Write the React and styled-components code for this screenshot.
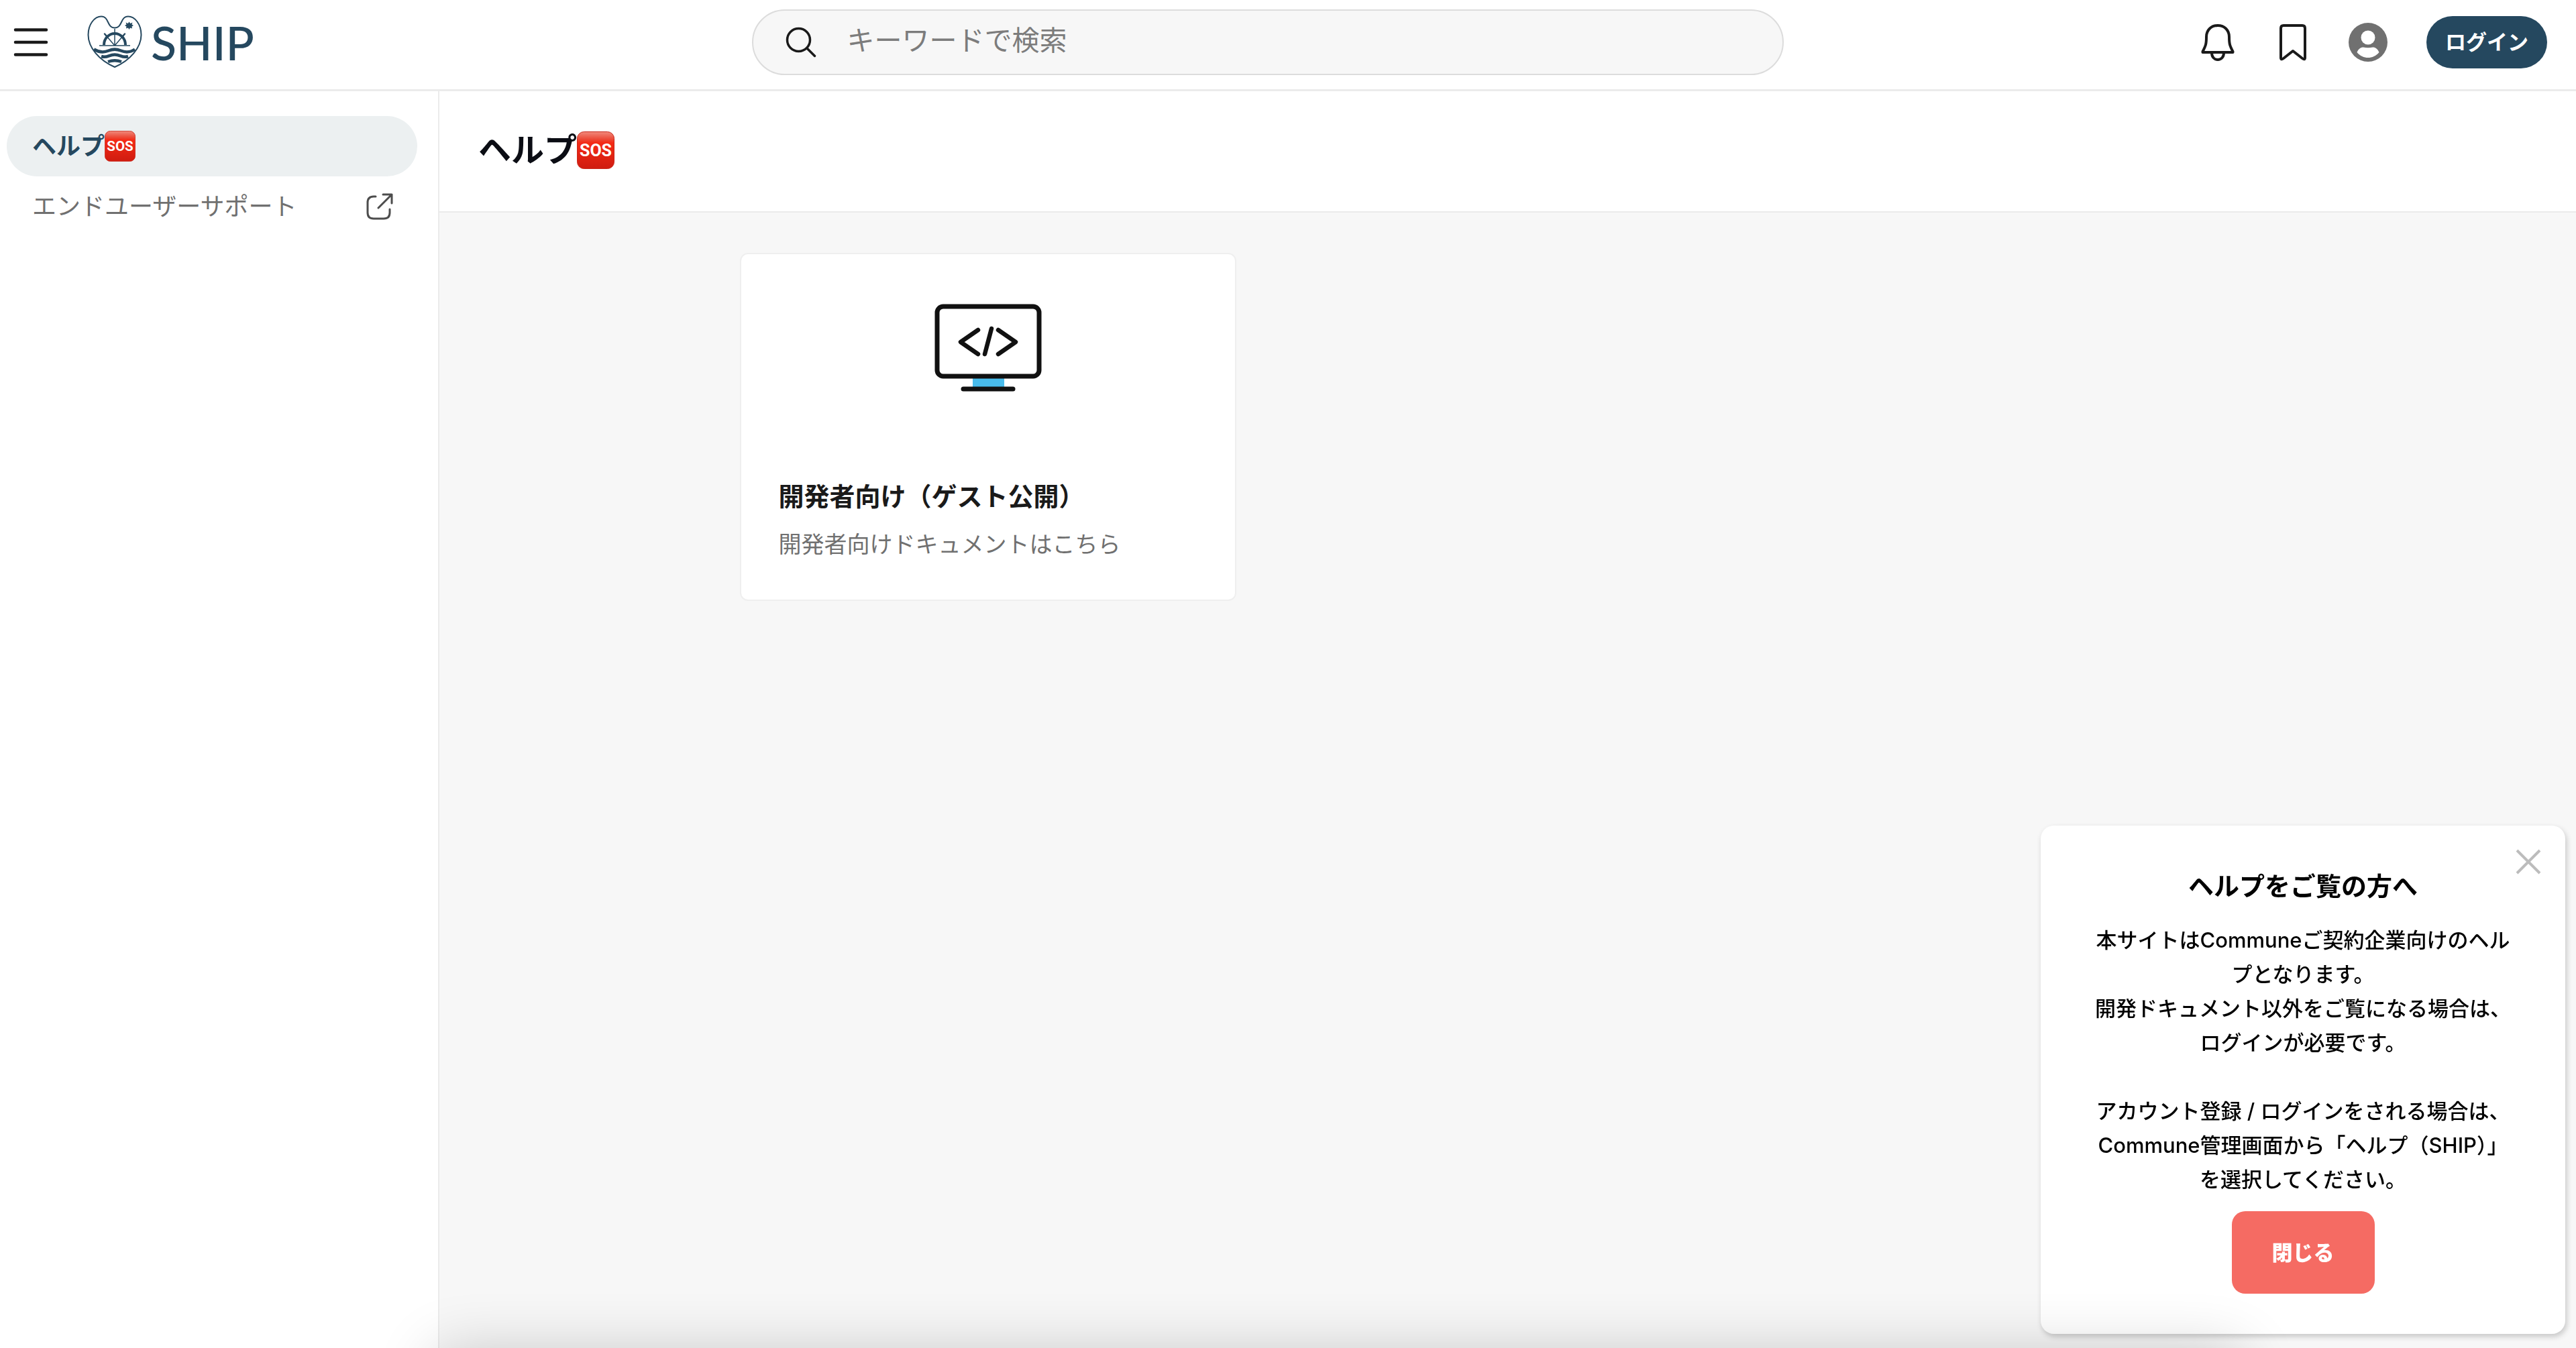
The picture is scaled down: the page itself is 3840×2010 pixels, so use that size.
import React from "react";
import styled, { createGlobalStyle } from "styled-components";

const color = {
  ink: "#1a1a1a",
  navy: "#25485f",
  grey: "#707070",
  line: "#ebebeb",
  canvas: "#f7f7f7",
};

const GlobalStyle = createGlobalStyle`
  *, *::before, *::after { box-sizing: border-box; }
  body {
    margin: 0;
    background: #fff;
    color: ${color.ink};
    font-family: Inter, "Noto Sans CJK JP", sans-serif;
    overflow: hidden;
  }
  button, input { font: inherit; }
  h1, h2, p, ul { margin: 0; padding: 0; }
`;

const Page = styled.div`
  display: flex;
  flex-direction: column;
  min-height: 100vh;
`;

const Header = styled.header`
  display: grid;
  grid-template-columns: 29fr minmax(0, 1538px) 30fr;
  align-items: center;
  height: 136px;
  padding: 0 43px 8px 20px;
  border-bottom: 3px solid ${color.line};
`;

const HeaderStart = styled.div`
  display: flex;
  align-items: center;
  gap: 58px;
`;

const HeaderEnd = styled.nav`
  display: flex;
  justify-content: flex-end;
  align-items: center;
  gap: 58px;
`;

const IconGroup = styled.div`
  display: grid;
  grid-template-columns: repeat(3, 58px);
  align-items: center;
  gap: 54px;
`;

const IconButton = styled.button`
  display: flex;
  justify-content: center;
  padding: 0;
  border: 0;
  background: none;
  color: ${(p) => p.$color || color.ink};
  cursor: pointer;
`;

const Brand = styled.a`
  display: flex;
  align-items: center;
  gap: 13px;
  color: ${color.navy};
  text-decoration: none;
`;

const BrandName = styled.span`
  font-family: Lato, sans-serif;
  font-size: 70px;
  line-height: 80px;
  font-weight: 500;
`;

const Search = styled.label`
  display: flex;
  align-items: center;
  gap: 46px;
  height: 98px;
  padding: 0 48px;
  border: 2px solid #dcdcdc;
  border-radius: 49px;
  background: ${color.canvas};
`;

const SearchInput = styled.input`
  flex: 1;
  min-width: 0;
  padding: 0 0 6px;
  border: 0;
  outline: 0;
  background: none;
  font-size: 41px;
  line-height: 60px;
  color: ${color.ink};
  &::placeholder { color: #7c7c7c; opacity: 1; }
`;

const LoginButton = styled.button`
  height: 78px;
  padding: 0 28px;
  border: 0;
  border-radius: 39px;
  background: ${color.navy};
  color: #fff;
  font-size: 31px;
  font-weight: 700;
  line-height: 46px;
`;

const Body = styled.div`
  display: flex;
  flex: 1;
`;

const Sidebar = styled.aside`
  flex: none;
  width: 655px;
  padding: 37px 31px 0 10px;
  border-right: 2px solid ${color.line};
`;

const NavList = styled.ul`
  list-style: none;
`;

const NavLink = styled.a`
  display: flex;
  align-items: center;
  justify-content: ${(p) => (p.$active ? "flex-start" : "space-between")};
  height: 90px;
  padding: 0 36px 0 38px;
  border-radius: 45px;
  background: ${(p) => (p.$active ? "#ecf0f1" : "transparent")};
  color: ${(p) => (p.$active ? color.navy : color.grey)};
  font-size: 36px;
  font-weight: ${(p) => (p.$active ? 700 : 400)};
  line-height: 52px;
  text-decoration: none;
`;

const Main = styled.main`
  flex: 1;
  display: flex;
  flex-direction: column;
  background: ${color.canvas};
`;

const TitleBar = styled.div`
  display: flex;
  align-items: center;
  height: 181px;
  padding: 0 58px 4px;
  border-bottom: 2px solid ${color.line};
  background: #fff;
`;

const Title = styled.h1`
  display: flex;
  align-items: center;
  font-size: 49px;
  line-height: 72px;
  font-weight: 700;
  color: #0b0d14;
`;

const CardGrid = styled.section`
  display: grid;
  grid-template-columns: repeat(3, 1fr);
  gap: 35px;
  width: 100%;
  max-width: 2290px;
  margin: 0 auto;
  padding: 60px 0;
`;

const Card = styled.a`
  display: flex;
  flex-direction: column;
  padding: 74px 56px 58px;
  border: 2px solid #efefef;
  border-radius: 12px;
  background: #fff;
  color: ${color.ink};
  text-decoration: none;
`;

const CardArt = styled.div`
  display: flex;
  justify-content: center;
  padding-bottom: 127px;
`;

const CardTitle = styled.h2`
  font-size: 38px;
  line-height: 56px;
  font-weight: 700;
`;

const CardText = styled.p`
  margin-top: 20px;
  font-size: 34px;
  line-height: 48px;
  color: ${color.grey};
`;

const Popup = styled.section`
  position: fixed;
  right: 16px;
  bottom: 21px;
  width: 782px;
  padding: 62px 60px 60px;
  border-radius: 20px;
  background: #fff;
  box-shadow: 2px 4px 8px rgba(0, 0, 0, 0.2);
  color: #000;
  text-align: center;
`;

const PopupClose = styled(IconButton)`
  position: absolute;
  top: 35px;
  right: 36px;
`;

const PopupTitle = styled.h2`
  font-size: 38px;
  line-height: 56px;
  font-weight: 700;
`;

const PopupText = styled.p`
  margin: 27px 0 22px;
  font-size: 31px;
  line-height: 51px;
  font-weight: 500;
  white-space: nowrap;
`;

const PopupButton = styled.button`
  height: 123px;
  padding: 0 60px;
  border: 0;
  border-radius: 20px;
  background: #f56b63;
  color: #fff;
  font-size: 31px;
  line-height: 46px;
  font-weight: 900;
`;

const BottomShade = styled.div`
  position: fixed;
  top: 100%;
  left: 650px;
  right: 500px;
  height: 200px;
  box-shadow: 0 6px 90px rgba(0, 0, 0, 0.2);
  pointer-events: none;
`;

function MenuIcon() {
  return (
    <svg width="52" height="44" viewBox="0 0 52 44" stroke="currentColor" strokeWidth="4.5" strokeLinecap="round" aria-hidden="true">
      <path d="M3 3.5H49M3 22H49M3 40.5H49" />
    </svg>
  );
}

function ShipMark() {
  return (
    <svg width="82" height="80" viewBox="0 0 82 80" fill="none" stroke="currentColor" aria-hidden="true">
      <path strokeWidth="2" d="M41 77C18 67 1.500 48 1.500 29C1.500 13 11 1.500 21 1.500C33 1.500 29 18.500 41 18.500C53 18.500 49 1.500 61 1.500C71 1.500 80.500 13 80.500 29C80.500 48 64 67 41 77Z" />
      <path strokeWidth="4" d="M25 44A16 17 0 0 1 57 44" />
      <path strokeWidth="1.500" d="M18 45H64M41 45V20M41 45L29 31M41 45L53 31" />
      <path strokeWidth="2.500" strokeLinecap="round" d="M29 31L26 27.500M53 31L56 27.500" />
      <path strokeWidth="4.500" d="M10 50.500C19 56 26 55 32 52.500C38 50 44 50 50 52.500C56 55 63 56 71 50.500M21 61C30 64 32 58.500 41 58.500C50 58.500 52 64 61 61M31 69C38 66.500 44 66.500 51 69" />
      <path fill="currentColor" stroke="none" d="M62.500 9.500L64.300 12L67.500 10.500L66.500 13.500L69 15L66.500 16.500L67 19.500L64 18.500L62.500 21L61 18.500L58 19.500L58.500 16.500L56 15L58.500 13.500L57.500 10.500L60.700 12Z" />
    </svg>
  );
}

function SearchIcon() {
  return (
    <svg width="46" height="46" viewBox="0 0 46 46" fill="none" stroke={color.ink} strokeWidth="3.5" strokeLinecap="round" aria-hidden="true">
      <circle cx="19.5" cy="19.5" r="17" />
      <path d="M32 32L43.500 43.500" />
    </svg>
  );
}

function BellIcon() {
  return (
    <svg width="50" height="56" viewBox="0 0 50 56" fill="none" stroke="currentColor" strokeWidth="4" strokeLinejoin="round" aria-hidden="true">
      <path d="M25 3C15 3 8 10 8 20C8 31 7 33 2.500 42V43H47.500V42C43 33 42 31 42 20C42 10 35 3 25 3Z" />
      <path d="M16 44C16 50 20 54 25 54C30 54 34 50 34 44" />
    </svg>
  );
}

function BookmarkIcon() {
  return (
    <svg width="40" height="56" viewBox="0 0 40 56" fill="none" stroke="currentColor" strokeWidth="4" strokeLinejoin="round" aria-hidden="true">
      <path d="M2 7Q2 3 6 3H34Q38 3 38 7V51Q38 55 34 52L20 41L6 52Q2 55 2 51Z" />
    </svg>
  );
}

function AvatarIcon() {
  return (
    <svg width="58" height="58" viewBox="0 0 58 58" aria-hidden="true">
      <circle cx="29" cy="29" r="29" fill="currentColor" />
      <circle cx="29" cy="22" r="10.5" fill="#fff" />
      <path fill="#fff" d="M12.500 44C15 38 19 36.500 22 36.500Q29 38 36 36.500C39 36.500 43 38 45.500 44C41 49.500 35 52 29 52C23 52 17 49.500 12.500 44Z" />
    </svg>
  );
}

function ExternalIcon() {
  return (
    <svg width="40" height="40" viewBox="0 0 40 40" fill="none" stroke="#4d4d4d" strokeWidth="3" strokeLinecap="round" strokeLinejoin="round" aria-hidden="true">
      <path d="M14 5H11Q2 5 2 14V29Q2 38 11 38H26Q35 38 35 29V24" />
      <path d="M25 2H38V15M38 2L18 22" />
    </svg>
  );
}

function SosBadge({ size }) {
  return (
    <svg width={size} height={size} viewBox="0 0 56 56" role="img" aria-label="SOS">
      <defs>
        <linearGradient id="sosFace" x1="0" y1="0" x2="0" y2="1">
          <stop offset="0" stopColor="#f08a7c" />
          <stop offset="0.2" stopColor="#ec4a38" />
          <stop offset="0.3" stopColor="#f42a15" />
          <stop offset="1" stopColor="#cf1c10" />
        </linearGradient>
      </defs>
      <rect x="0.5" y="0.5" width="55" height="55" rx="10" fill="url(#sosFace)" stroke="#c9271a" />
      <text x="28" y="37" textAnchor="middle" fill="#fff" fontFamily="'Liberation Sans Narrow', Roboto, sans-serif" fontSize="25" fontWeight="700">SOS</text>
    </svg>
  );
}

function CodeMonitor() {
  return (
    <svg width="160" height="132" viewBox="0 0 160 132" fill="none" stroke="#111" strokeWidth="7" strokeLinecap="round" strokeLinejoin="round" aria-hidden="true">
      <rect x="57" y="110" width="47" height="14" fill="#48bbeb" stroke="none" />
      <rect x="4" y="4" width="152" height="104" rx="9" />
      <path d="M43 127H117" />
      <path strokeWidth="6.5" d="M65 39L39 57L65 75M95 39L121 57L95 75M85 37L75 75" />
    </svg>
  );
}

function CloseIcon() {
  return (
    <svg width="38" height="38" viewBox="0 0 38 38" stroke="#bcbcbc" strokeWidth="4" aria-hidden="true">
      <path d="M2 2L36 36M36 2L2 36" />
    </svg>
  );
}

export default function App() {
  return (
    <>
      <GlobalStyle />
      <Page lang="ja">
        <Header>
          <HeaderStart>
            <IconButton type="button" aria-label="メニュー"><MenuIcon /></IconButton>
            <Brand href="#home"><ShipMark /><BrandName>SHIP</BrandName></Brand>
          </HeaderStart>
          <Search>
            <SearchIcon />
            <SearchInput type="search" placeholder="キーワードで検索" aria-label="キーワードで検索" />
          </Search>
          <HeaderEnd>
            <IconGroup>
              <IconButton type="button" aria-label="通知"><BellIcon /></IconButton>
              <IconButton type="button" aria-label="ブックマーク"><BookmarkIcon /></IconButton>
              <IconButton type="button" aria-label="アカウント" $color="#707070"><AvatarIcon /></IconButton>
            </IconGroup>
            <LoginButton type="button">ログイン</LoginButton>
          </HeaderEnd>
        </Header>
        <Body>
          <Sidebar>
            <NavList>
              <li><NavLink href="#help" $active>ヘルプ<SosBadge size={46} /></NavLink></li>
              <li><NavLink href="#support">エンドユーザーサポート<ExternalIcon /></NavLink></li>
            </NavList>
          </Sidebar>
          <Main>
            <TitleBar>
              <Title>ヘルプ<SosBadge size={56} /></Title>
            </TitleBar>
            <CardGrid>
              <Card href="#developers">
                <CardArt><CodeMonitor /></CardArt>
                <CardTitle>開発者向け（ゲスト公開）</CardTitle>
                <CardText>開発者向けドキュメントはこちら</CardText>
              </Card>
            </CardGrid>
          </Main>
        </Body>
      </Page>
      <Popup lang="ja" aria-labelledby="popup-title">
        <PopupClose type="button" aria-label="閉じる"><CloseIcon /></PopupClose>
        <PopupTitle id="popup-title">ヘルプをご覧の方へ</PopupTitle>
        <PopupText>
          本サイトはCommuneご契約企業向けのヘル<br />プとなります。<br />
          開発ドキュメント以外をご覧になる場合は、<br />ログインが必要です。<br />
          <br />
          アカウント登録 / ログインをされる場合は、<br />Commune管理画面から「ヘルプ（SHIP）」<br />を選択してください。
        </PopupText>
        <PopupButton type="button">閉じる</PopupButton>
      </Popup>
      <BottomShade />
    </>
  );
}
